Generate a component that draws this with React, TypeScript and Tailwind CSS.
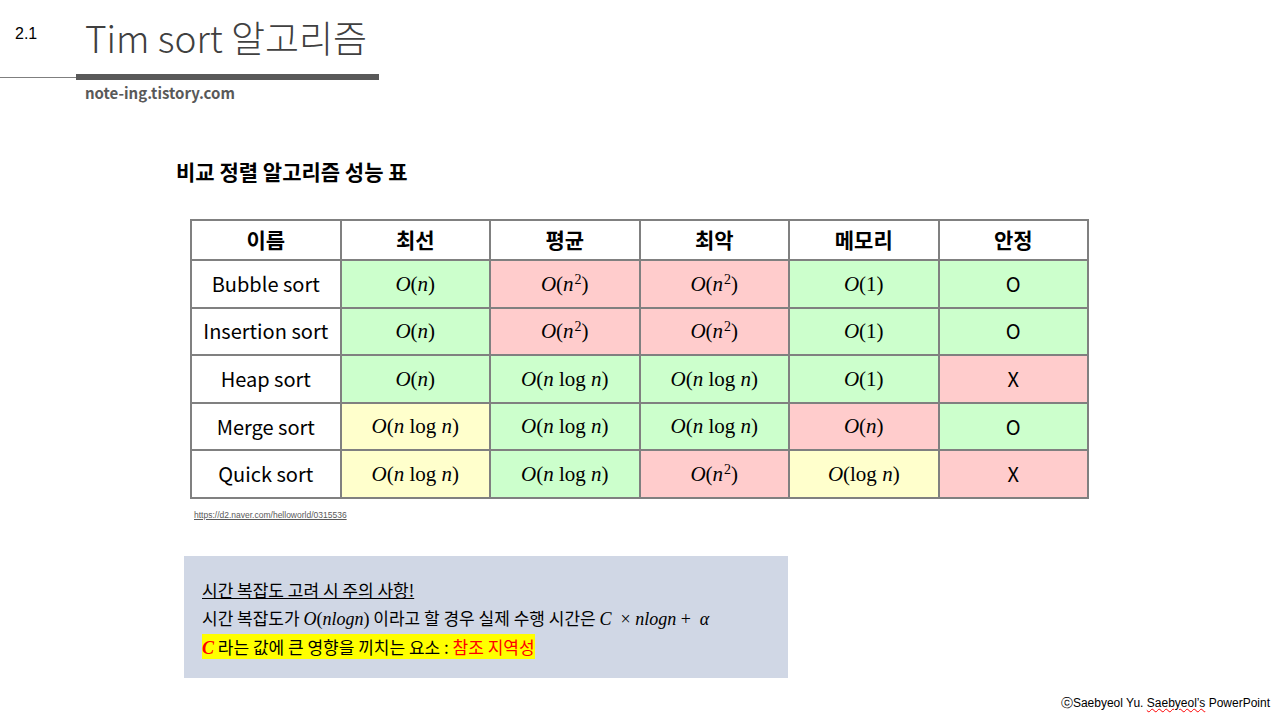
import type { ReactNode } from 'react';

type Tone = 'g' | 'r' | 'y' | 'w';

const toneClass: Record<Tone, string> = {
  g: 'bg-[#ccffcc]',
  r: 'bg-[#ffcccc]',
  y: 'bg-[#ffffcc]',
  w: 'bg-white',
};

const mathFont = { fontFamily: '"Liberation Serif", "DejaVu Serif", serif' };

function I({ children }: { children: ReactNode }) {
  return <span className="italic">{children}</span>;
}

function On() {
  return (
    <span style={mathFont} className="text-[21px]">
      <I>O</I>(<I>n</I>)
    </span>
  );
}

function On2() {
  return (
    <span style={mathFont} className="text-[21px]">
      <I>O</I>(<I>n</I>
      <sup className="ml-[1px] text-[14px]">2</sup>)
    </span>
  );
}

function Onlogn() {
  return (
    <span style={mathFont} className="text-[21px]">
      <I>O</I>(<I>n</I> log <I>n</I>)
    </span>
  );
}

function O1() {
  return (
    <span style={mathFont} className="text-[21px]">
      <I>O</I>(1)
    </span>
  );
}

function Ologn() {
  return (
    <span style={mathFont} className="text-[21px]">
      <I>O</I>(log <I>n</I>)
    </span>
  );
}

const headers = ['이름', '최선', '평균', '최악', '메모리', '안정'];

const rows: { name: string; cells: [ReactNode, Tone][] }[] = [
  {
    name: 'Bubble sort',
    cells: [
      [<On />, 'g'],
      [<On2 />, 'r'],
      [<On2 />, 'r'],
      [<O1 />, 'g'],
      ['O', 'g'],
    ],
  },
  {
    name: 'Insertion sort',
    cells: [
      [<On />, 'g'],
      [<On2 />, 'r'],
      [<On2 />, 'r'],
      [<O1 />, 'g'],
      ['O', 'g'],
    ],
  },
  {
    name: 'Heap sort',
    cells: [
      [<On />, 'g'],
      [<Onlogn />, 'g'],
      [<Onlogn />, 'g'],
      [<O1 />, 'g'],
      ['X', 'r'],
    ],
  },
  {
    name: 'Merge sort',
    cells: [
      [<Onlogn />, 'y'],
      [<Onlogn />, 'g'],
      [<Onlogn />, 'g'],
      [<On />, 'r'],
      ['O', 'g'],
    ],
  },
  {
    name: 'Quick sort',
    cells: [
      [<Onlogn />, 'y'],
      [<Onlogn />, 'g'],
      [<On2 />, 'r'],
      [<Ologn />, 'y'],
      ['X', 'r'],
    ],
  },
];

export default function App() {
  return (
    <div
      className="flex h-[718px] w-[1280px] flex-col overflow-hidden bg-white text-black"
      style={{ fontFamily: '"Noto Sans CJK KR", "Noto Sans", sans-serif' }}
    >
      {/* slide header */}
      <div className="flex items-end pt-[10px]">
        <span
          className="mb-[18px] ml-[15px] w-[70px] text-[16px] text-[#000]"
          style={{ fontFamily: '"Liberation Sans", sans-serif' }}
        >
          2.1
        </span>
        <span className="text-[37px] font-light leading-[54px] text-[#404040]">
          Tim sort 알고리즘
        </span>
      </div>
      <div className="mt-[10px] flex items-center">
        <div className="h-px w-[76px] bg-[#7f7f7f]" />
        <div className="h-[6px] w-[303px] bg-[#595959]" />
      </div>
      <div className="ml-[85px] mt-[2px] text-[15px] font-bold leading-[22px] text-[#595959]">
        note-ing.tistory.com
      </div>

      {/* table title */}
      <div className="ml-[176px] mt-[52px] text-[21px] font-bold leading-[30px]">
        비교 정렬 알고리즘 성능 표
      </div>

      <table className="ml-[190px] mt-[33px] w-[899px] table-fixed border-collapse text-center">
        <thead>
          <tr className="h-[40px]">
            {headers.map((h) => (
              <th
                key={h}
                className="border-2 border-[#808080] bg-white text-[21px] font-bold"
              >
                {h}
              </th>
            ))}
          </tr>
        </thead>
        <tbody>
          {rows.map((r) => (
            <tr key={r.name} className="h-[47.6px]">
              <td className="border-2 border-[#808080] bg-white text-[20px]">
                {r.name}
              </td>
              {r.cells.map(([c, t], i) => (
                <td
                  key={i}
                  className={`border-2 border-[#808080] text-[20px] ${toneClass[t]}`}
                >
                  {c}
                </td>
              ))}
            </tr>
          ))}
        </tbody>
      </table>

      <div
        className="ml-[194px] mt-[10px] text-[8.5px] text-[#595959] underline"
        style={{ fontFamily: '"Liberation Sans", sans-serif' }}
      >
        https://d2.naver.com/helloworld/0315536
      </div>

      {/* note box */}
      <div className="ml-[184px] mt-[34px] flex h-[122px] w-[604px] flex-col gap-[2px] bg-[#d0d7e5] pl-[18px] pt-[21px] text-[17px] leading-[26px]">
        <div>
          <span className="underline">시간 복잡도 고려 시 주의 사항!</span>
        </div>
        <div>
          시간 복잡도가{' '}
          <span style={mathFont} className="text-[18px]">
            <I>O</I>(<I>nlogn</I>)
          </span>{' '}
          이라고 할 경우 실제 수행 시간은{' '}
          <span style={mathFont} className="text-[18px]">
            <I>C</I> &nbsp;× <I>nlogn</I> + &nbsp;<I>α</I>
          </span>
        </div>
        <div>
          <span className="bg-[#ffff00]">
            <span style={mathFont} className="text-[18px] font-bold italic text-[#ff0000]">
              C
            </span>{' '}
            라는 값에 큰 영향을 끼치는 요소 :{' '}
            <span className="text-[#ff0000]">참조 지역성</span>
          </span>
        </div>
      </div>

      <div
        className="mt-auto mb-[7px] mr-[10px] text-right text-[12px] leading-[16px]"
        style={{ fontFamily: '"Liberation Sans", sans-serif' }}
      >
        ⓒSaebyeol Yu.{' '}
        <span className="underline decoration-wavy decoration-[#ff0000] decoration-1">
          Saebyeol’s
        </span>{' '}
        PowerPoint
      </div>
    </div>
  );
}
